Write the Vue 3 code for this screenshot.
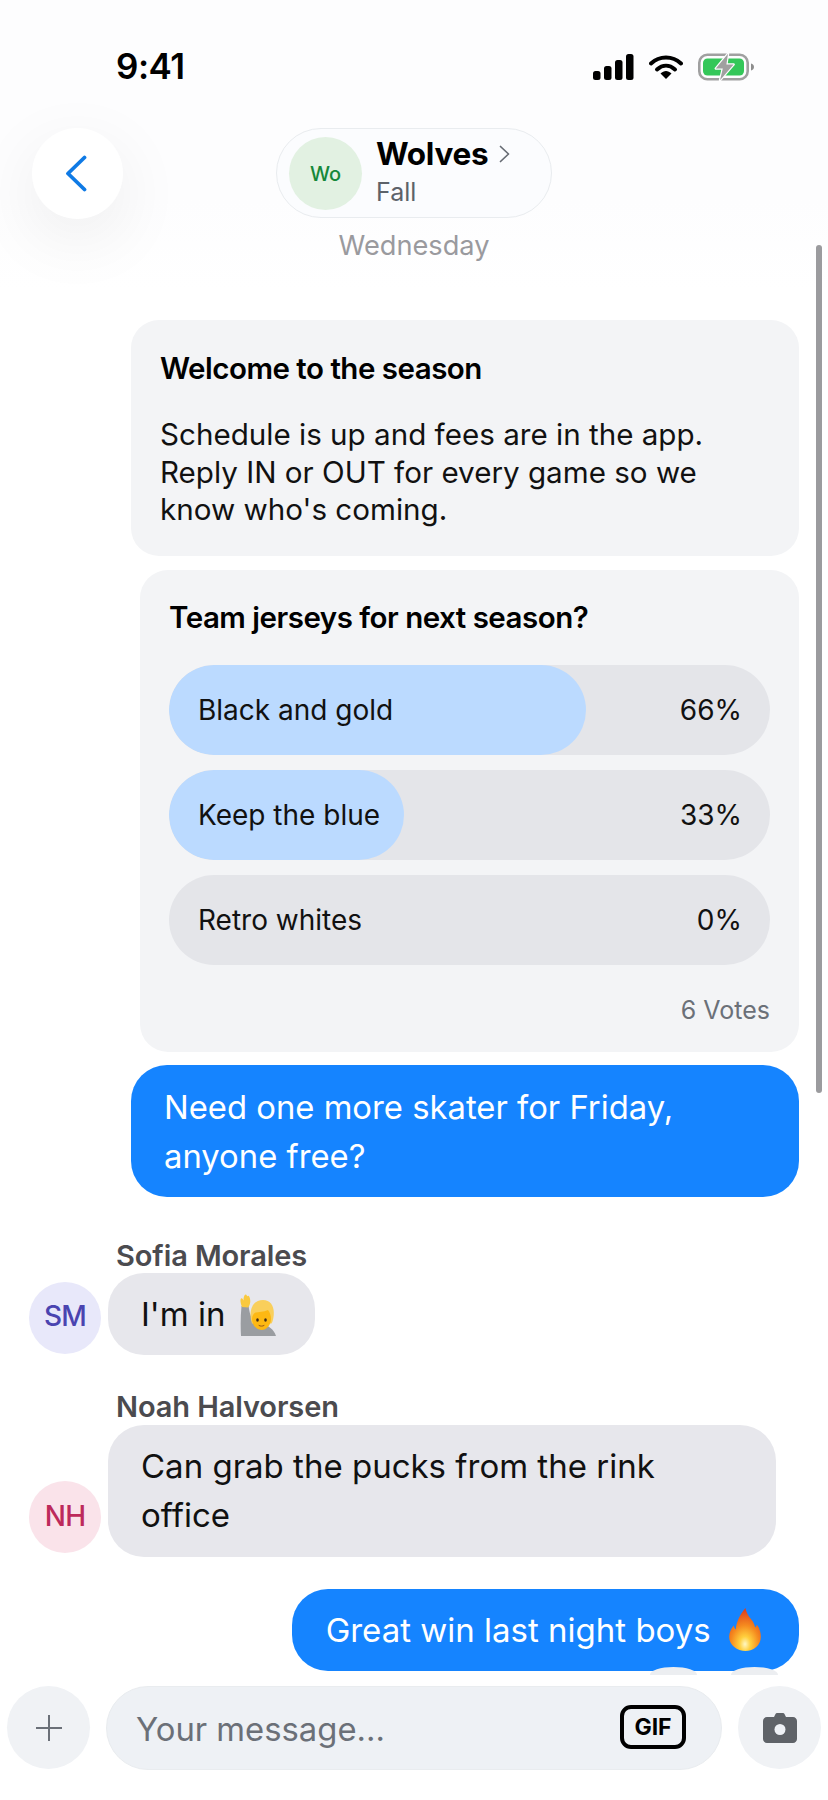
<script setup>
const pollOptions = [
  { label: 'Black and gold', pct: 66, fill: 417 },
  { label: 'Keep the blue', pct: 33, fill: 235 },
  { label: 'Retro whites', pct: 0, fill: 0 },
]
</script>

<template>
  <div class="screen">
    <div class="statusbar">
      <span class="time">9:41</span>
      <div class="status-icons">
        <svg width="41" height="26" viewBox="0 0 41 26">
          <rect x="0" y="17" width="7.5" height="9" rx="2.5" fill="#000" />
          <rect x="11" y="12" width="7.5" height="14" rx="2.5" fill="#000" />
          <rect x="22" y="6" width="7.5" height="20" rx="2.5" fill="#000" />
          <rect x="33" y="0" width="7.5" height="26" rx="2.5" fill="#000" />
        </svg>
        <svg width="34" height="24" viewBox="0 0 34 24">
          <path d="M2 8.5C10.5 0.5 23.5 0.5 32 8.5" fill="none" stroke="#000" stroke-width="4" stroke-linecap="round" />
          <path d="M8 14.5C13.5 9.5 20.5 9.5 26 14.5" fill="none" stroke="#000" stroke-width="4" stroke-linecap="round" />
          <path d="M11.5 18.5C15 15 19 15 22.5 18.5L17 24Z" fill="#000" />
        </svg>
        <svg width="57" height="28" viewBox="0 0 57 28">
          <rect x="1.300" y="1.800" width="48.400" height="24.400" rx="8" fill="none" stroke="#a0a0a0" stroke-width="2.600" />
          <rect x="5" y="5.500" width="41" height="17" rx="4.500" fill="#34c759" />
          <path d="M53 10.500c1.800.4 3 1.800 3 3.500s-1.200 3.100-3 3.500z" fill="#8d8d8d" />
          <path d="M30 .8L17.800 15.500h7L22 27.200 35.600 11.500h-7.200z" fill="#a0a0a0" stroke="#fdfdfe" stroke-width="2.400" stroke-linejoin="round" paint-order="stroke" />
        </svg>
      </div>
    </div>

    <div class="navbar">
      <button class="back">
        <svg width="24" height="37" viewBox="0 0 24 37">
          <path d="M20.500 2.500L4 18.500 20.500 34.500" fill="none" stroke="#0f7ae5" stroke-width="3.800" stroke-linecap="round" stroke-linejoin="round" />
        </svg>
      </button>
      <div class="team-pill">
        <div class="team-avatar">Wo</div>
        <div class="team-text">
          <div class="team-name">
            Wolves
            <svg width="11" height="18" viewBox="0 0 11 18">
              <path d="M1.500 1.500L9.500 9 1.500 16.500" fill="none" stroke="#666b73" stroke-width="1.700" stroke-linecap="round" stroke-linejoin="round" />
            </svg>
          </div>
          <div class="team-sub">Fall</div>
        </div>
      </div>
    </div>

    <div class="day">Wednesday</div>

    <div class="thread">
      <div class="card welcome">
        <div class="card-title">Welcome to the season</div>
        <p class="card-body">Schedule is up and fees are in the app.<br />Reply IN or OUT for every game so we<br />know who's coming.</p>
      </div>

      <div class="card poll">
        <div class="card-title">Team jerseys for next season?</div>
        <div class="options">
          <div v-for="opt in pollOptions" :key="opt.label" class="option">
            <div v-if="opt.fill" class="option-fill" :style="{ width: opt.fill + 'px' }"></div>
            <span class="option-label">{{ opt.label }}</span>
            <span class="option-pct">{{ opt.pct }}%</span>
          </div>
        </div>
        <div class="votes">6 Votes</div>
      </div>

      <div class="bubble mine skater">Need one more skater for Friday,<br />anyone free?</div>

      <div class="sender sofia">Sofia Morales</div>
      <div class="incoming">
        <div class="avatar sm">SM</div>
        <div class="bubble theirs short">
          I'm in
          <svg class="emoji hand" width="37" height="43" viewBox="0 0 37 43">
            <path d="M1 42c-.5-9-.5-20 .5-30l7-1c.5 5 1.500 10 3.500 13 2 3 6 5 10 6 6 1.500 12 5 14 12z" fill="#9a9da1" />
            <path d="M2 13C.5 9 0 5.500 1 4.500c1-.8 2 .5 2.500 2C3.500 4 4 1 5.500.5c1-.3 1.500 1 1.500 2 .5-1 1.800-1 2.200 0 1 2 1.300 4.500 1 6-.3 2-1.200 4-2.200 5z" fill="#f9c93f" />
            <path d="M11 26C9 14 14 6 23 6c8 0 12 7 10.500 17-.5 3-1 5-2 6.500H12z" fill="#f9cf5b" />
            <path d="M12 25c0-3 1.500-5.500 3.500-6.500 3-.5 8-.5 12.500-2.500 2 2.500 3 5.500 3 9 0 6-4.500 11-9.500 11S12 31 12 25z" fill="#fdb813" />
            <ellipse cx="17.500" cy="26" rx="1.300" ry="1.700" fill="#3f2a18" />
            <ellipse cx="25.500" cy="26" rx="1.300" ry="1.700" fill="#3f2a18" />
            <path d="M19 31.500c1.500.9 3.500.9 5 0" fill="none" stroke="#96561a" stroke-width="1" stroke-linecap="round" />
          </svg>
        </div>
      </div>

      <div class="sender noah">Noah Halvorsen</div>
      <div class="incoming">
        <div class="avatar nh">NH</div>
        <div class="bubble theirs wide">Can grab the pucks from the rink<br />office</div>
      </div>

      <div class="bubble mine win">
        Great win last night boys
        <svg class="emoji fire" width="34" height="43" viewBox="0 0 31 42">
          <defs>
            <radialGradient id="flame" cx="50%" cy="84%" r="80%">
              <stop offset="0" stop-color="#fff7c2" />
              <stop offset="0.22" stop-color="#ffcf3d" />
              <stop offset="0.55" stop-color="#f58a1f" />
              <stop offset="1" stop-color="#dd3f1c" />
            </radialGradient>
          </defs>
          <path d="M16 0c1 6 4 9 7 13 1 2 2 4 2.500 6 1-1 1.500-2 1.500-3 3 4 4 8 4 12 0 8-7 14-15 14S0 36 0 28c0-4 2-8 4.500-11 .5 2 1 3 2 4C7 13 11 6 16 0z" fill="url(#flame)" />
        </svg>
        <div class="reactions">
          <span class="reaction"></span>
          <span class="reaction"></span>
        </div>
      </div>
    </div>

    <div class="scrollbar"></div>

    <div class="composer">
      <button class="round">
        <svg width="28" height="28" viewBox="0 0 28 28">
          <path d="M14 1v26M1 14h26" stroke="#6b7078" stroke-width="2" fill="none" />
        </svg>
      </button>
      <div class="input">
        <span class="placeholder">Your message...</span>
        <span class="gif">GIF</span>
      </div>
      <button class="round">
        <svg width="34" height="30" viewBox="0 0 34 30">
          <path d="M11 4l1.500-3c.3-.6.9-1 1.500-1h6c.6 0 1.200.4 1.500 1L23 4h7c2.200 0 4 1.800 4 4v18c0 2.200-1.800 4-4 4H4c-2.200 0-4-1.800-4-4V8c0-2.200 1.800-4 4-4z" fill="#5f6368" />
          <circle cx="17" cy="16.500" r="5.500" fill="#eef1f5" />
        </svg>
      </button>
    </div>
  </div>
</template>

<style>
html, body {
  margin: 0;
  background: #fff;
}
</style>

<style scoped>
.screen {
  position: relative;
  width: 828px;
  height: 1800px;
  overflow: hidden;
  background: linear-gradient(#fdfdfe 0, #fdfdfe 200px, #fff 290px);
  font-family: Inter, "Liberation Sans", sans-serif;
  color: #000;
}

.statusbar {
  display: flex;
  justify-content: space-between;
  align-items: center;
  height: 128px;
  padding: 0 73px 0 116px;
  box-sizing: border-box;
}
.time {
  font-size: 35px;
  font-weight: 600;
  letter-spacing: -0.5px;
  position: relative;
  top: 2px;
}
.status-icons {
  display: flex;
  align-items: center;
  gap: 15px;
  position: relative;
  top: 3px;
}

.navbar {
  display: flex;
  justify-content: center;
  position: relative;
  height: 90px;
}
.back {
  position: absolute;
  left: 32px;
  top: 0;
  width: 91px;
  height: 91px;
  border: 0;
  border-radius: 50%;
  background: #fff;
  box-shadow: 0 20px 70px rgba(0, 0, 0, 0.07);
  display: flex;
  align-items: center;
  justify-content: center;
  padding: 0 4px 0 0;
}
.team-pill {
  width: 276px;
  height: 90px;
  box-sizing: border-box;
  border: 1.500px solid #e9ecef;
  border-radius: 45px;
  background: #fbfcfe;
  display: flex;
  align-items: center;
  padding-left: 12px;
  gap: 14px;
}
.team-avatar {
  width: 73px;
  height: 73px;
  border-radius: 50%;
  background: #e2f1e2;
  color: #16883a;
  font-size: 20px;
  font-weight: 500;
  padding-top: 2px;
  box-sizing: border-box;
  display: flex;
  align-items: center;
  justify-content: center;
}
.team-text {
  padding-bottom: 2px;
}
.team-name {
  font-size: 31.500px;
  font-weight: 700;
  line-height: 36px;
  letter-spacing: -0.3px;
  display: flex;
  align-items: center;
  gap: 11px;
}
.team-sub {
  font-size: 25px;
  line-height: 32px;
  color: #5d6269;
  margin-top: 4px;
}

.day {
  margin-top: 12px;
  height: 32px;
  line-height: 32px;
  text-align: center;
  font-size: 27.200px;
  color: #9a9a9e;
}

.thread {
  display: flex;
  flex-direction: column;
  align-items: flex-end;
  padding: 58px 29px 0 0;
}

.card {
  box-sizing: border-box;
  background: #f3f4f6;
  border-radius: 28px;
}
.card-title {
  font-size: 29.500px;
  font-weight: 600;
  line-height: 36px;
  letter-spacing: -0.5px;
}
.welcome {
  width: 668px;
  height: 236px;
  padding: 30px 30px 0 29px;
}
.card-body {
  margin: 30px 0 0;
  font-size: 29.600px;
  line-height: 37.500px;
  color: #111;
}
.poll {
  width: 659px;
  height: 482px;
  margin-top: 14px;
  padding: 29px 29px 0;
}
.options {
  display: flex;
  flex-direction: column;
  gap: 15px;
  margin-top: 30px;
}
.option {
  position: relative;
  height: 90px;
  border-radius: 45px;
  background: #e4e5e9;
  display: flex;
  align-items: center;
  justify-content: space-between;
  padding: 0 28px 0 29px;
  font-size: 28px;
  overflow: hidden;
}
.option-fill {
  position: absolute;
  left: 0;
  top: 0;
  bottom: 0;
  background: #bbdaff;
  border-radius: 45px;
}
.option-label,
.option-pct {
  position: relative;
  color: #111;
}
.votes {
  margin-top: 29px;
  text-align: right;
  font-size: 25px;
  line-height: 32px;
  color: #6b7078;
}

.bubble {
  box-sizing: border-box;
  font-size: 33px;
  line-height: 49px;
  border-radius: 36px;
}
.mine {
  background: #1584ff;
  color: #fff;
}
.skater {
  width: 668px;
  height: 132px;
  margin-top: 13px;
  padding: 18px 33px;
  font-size: 32.800px;
}
.theirs {
  background: #e7e7ec;
  color: #111;
  padding: 17px 33px;
}
.short {
  height: 82px;
  padding-right: 38px;
}
.wide {
  width: 668px;
  height: 132px;
}
.sender {
  align-self: flex-start;
  margin-left: 116px;
  font-size: 29px;
  font-weight: 600;
  line-height: 33px;
  letter-spacing: -0.1px;
  color: #4b4b4f;
}
.sofia {
  margin-top: 42px;
}
.noah {
  margin-top: 35px;
  line-height: 34px;
}
.incoming {
  align-self: flex-start;
  display: flex;
  align-items: flex-end;
  gap: 7px;
  margin-left: 29px;
  margin-top: 1px;
}
.avatar {
  width: 72px;
  height: 72px;
  box-sizing: border-box;
  border-radius: 50%;
  display: flex;
  align-items: center;
  justify-content: center;
  font-size: 28px;
  font-weight: 500;
  letter-spacing: -0.8px;
  margin-bottom: 1px;
}
.sm {
  background: #e8e8fa;
  color: #4a44b0;
  padding-bottom: 5px;
}
.nh {
  background: #fae3ea;
  color: #bd2a5b;
  margin-bottom: 4px;
  padding-bottom: 2px;
}
.emoji {
  vertical-align: -9px;
}
.hand {
  margin-left: 5px;
  vertical-align: -11px;
}
.fire {
  margin-left: 8px;
}
.win {
  position: relative;
  height: 82px;
  margin-top: 32px;
  padding: 17px 37px 16px 34px;
  white-space: nowrap;
}
.reactions {
  position: absolute;
  right: 21px;
  bottom: -4px;
  display: flex;
  gap: 34px;
}
.reaction {
  width: 47px;
  height: 8px;
  border-radius: 24px 24px 0 0 / 8px 8px 0 0;
  background: #eceef1;
}

.scrollbar {
  position: absolute;
  right: 6px;
  top: 245px;
  width: 6px;
  height: 848px;
  border-radius: 3px;
  background: #9b9b9e;
}

.composer {
  position: absolute;
  left: 0;
  right: 0;
  top: 1676px;
  bottom: 0;
  background: #fff;
  display: flex;
  align-items: flex-start;
  gap: 16px;
  padding: 10px 7px 0;
}
.round {
  width: 83px;
  height: 83px;
  flex: none;
  border: 0;
  border-radius: 50%;
  background: #f0f2f5;
  padding: 0;
  display: flex;
  align-items: center;
  justify-content: center;
}
.input {
  flex: 1;
  height: 84px;
  box-sizing: border-box;
  border: 1px solid #e9ecef;
  border-radius: 42px;
  background: #eef1f5;
  display: flex;
  align-items: center;
  justify-content: space-between;
  padding: 0 35px 0 29px;
}
.placeholder {
  font-size: 32.800px;
  color: #6b7078;
  position: relative;
  top: 1px;
}
.gif {
  width: 66px;
  height: 44px;
  box-sizing: border-box;
  border: 4.500px solid #000;
  border-radius: 11px;
  display: flex;
  align-items: center;
  justify-content: center;
  font-size: 23px;
  font-weight: 700;
  position: relative;
  top: -1px;
}
</style>
